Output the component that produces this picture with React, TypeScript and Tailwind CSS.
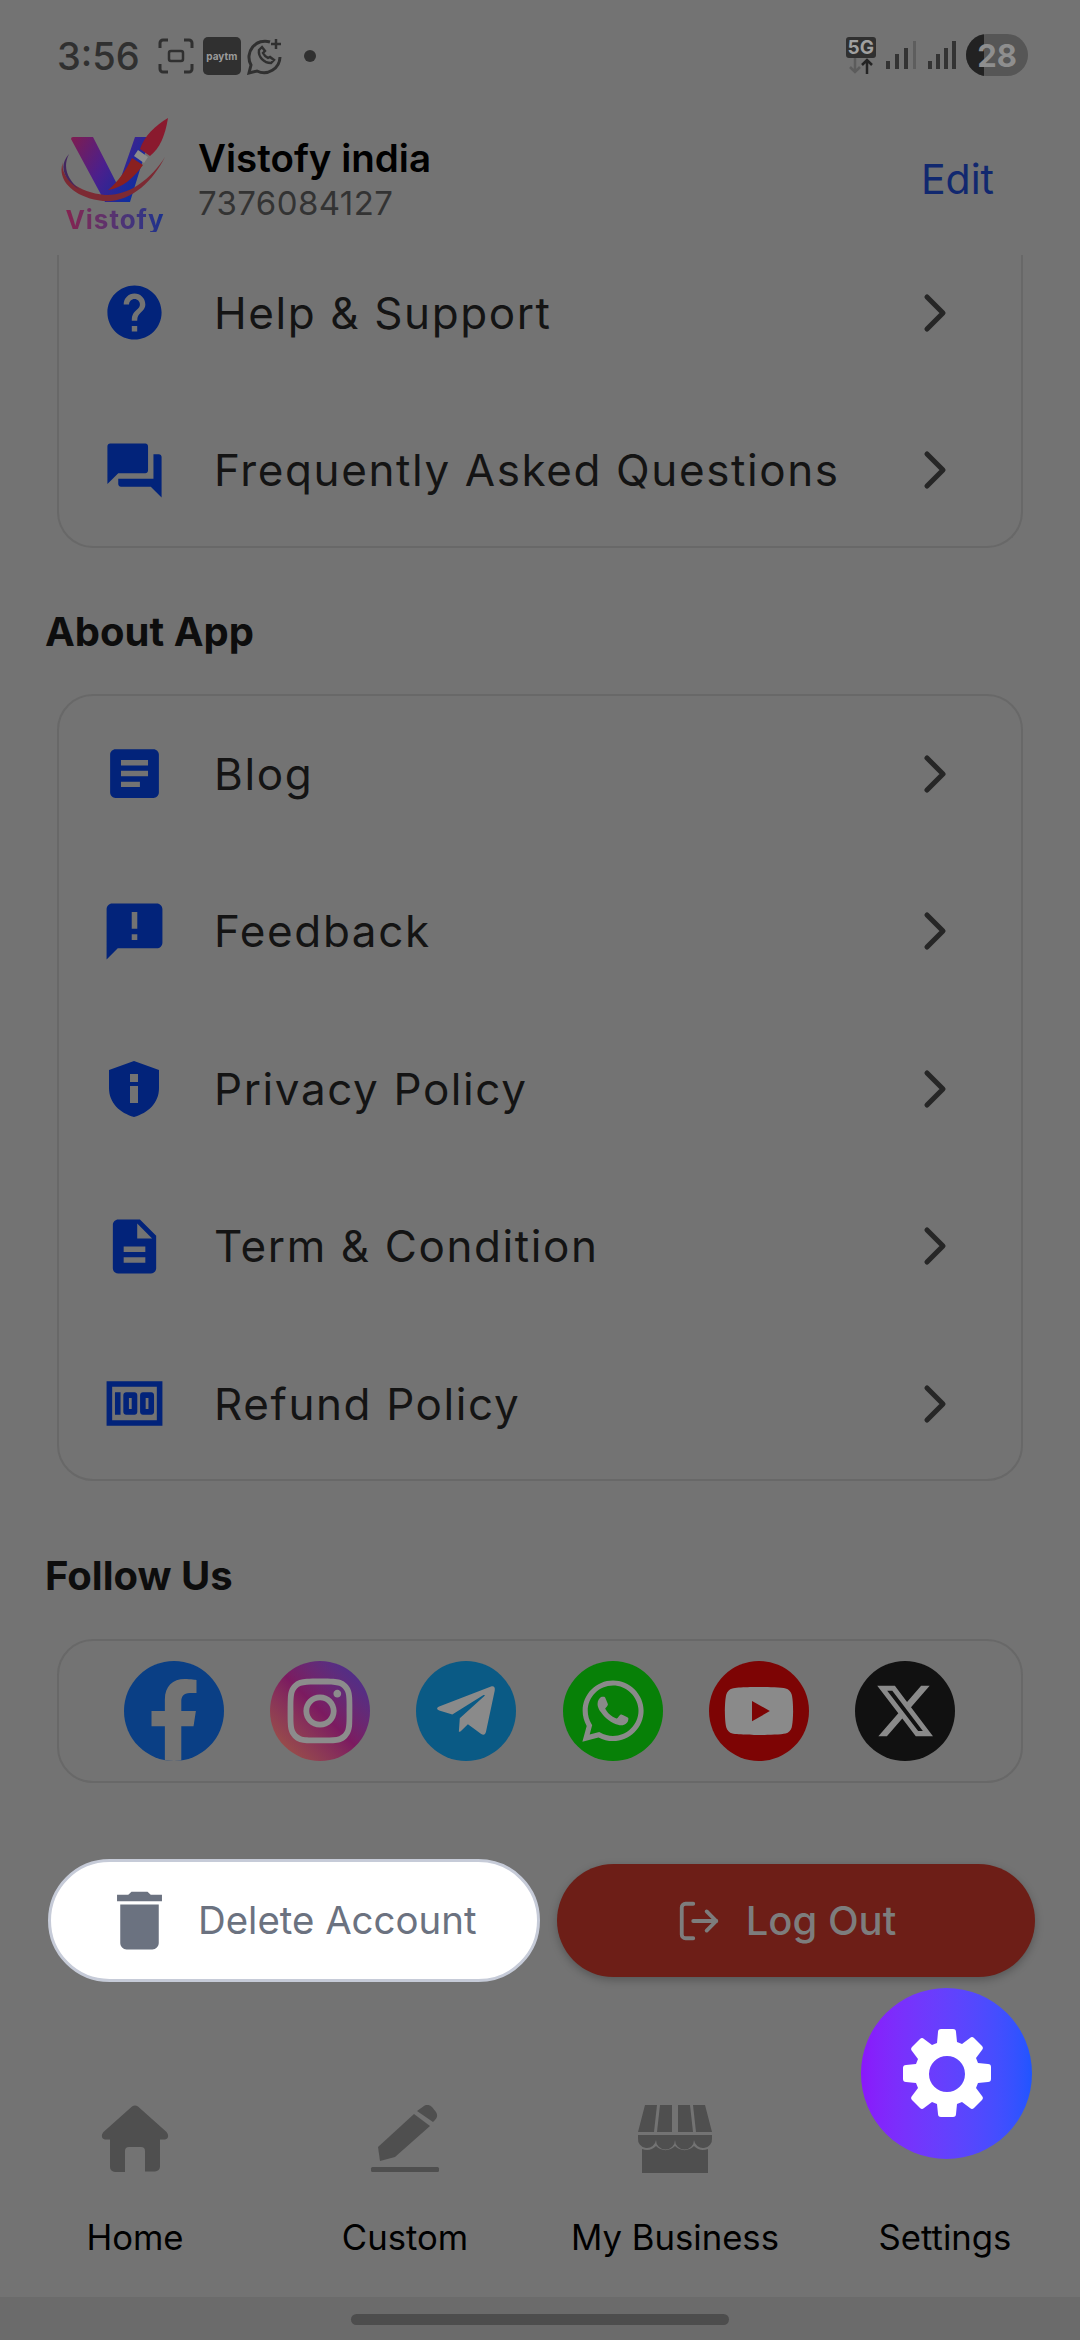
import { ChevronRight, LogOut } from 'lucide-react'
import { MdHelp, MdForum, MdArticle, MdAnnouncement, MdDescription, MdMoney, MdDelete } from 'react-icons/md'
import { FaFacebookF, FaInstagram, FaTelegramPlane, FaWhatsapp, FaYoutube } from 'react-icons/fa'
import { FaXTwitter } from 'react-icons/fa6'
import type { ReactNode } from 'react'

function ShieldInfo({ size }: { size: number }) {
  return (
    <svg width={size} height={size} viewBox="0 0 64 64" fill="#02237a">
      <path fillRule="evenodd" d="M32 4 L57 13 V31 C57 46 46 56 32 60 C18 56 7 46 7 31 V13 Z M28 17 H36 V25 H28 Z M28 29 H36 V46 H28 Z" />
    </svg>
  )
}

function Gear() {
  return (
    <svg width="90" height="90" viewBox="0 0 90 90" fill="#ffffff">
      <path
        fillRule="evenodd"
        d="M36 3a3 3 0 0 1 3-3h12a3 3 0 0 1 3 3l1 10 5 2 8-6a3 3 0 0 1 4 0l8 8a3 3 0 0 1 0 4l-6 8 2 5 10 1a3 3 0 0 1 3 3v12a3 3 0 0 1-3 3l-10 1-2 5 6 8a3 3 0 0 1 0 4l-8 8a3 3 0 0 1-4 0l-8-6-5 2-1 10a3 3 0 0 1-3 3H39a3 3 0 0 1-3-3l-1-10-5-2-8 6a3 3 0 0 1-4 0l-8-8a3 3 0 0 1 0-4l6-8-2-5-10-1a3 3 0 0 1-3-3V39a3 3 0 0 1 3-3l10-1 2-5-6-8a3 3 0 0 1 0-4l8-8a3 3 0 0 1 4 0l8 6 5-2zM45 27a18 18 0 1 0 0 36 18 18 0 0 0 0-36z"
      />
    </svg>
  )
}

const HELP_ITEMS = [
  { label: 'Help & Support', icon: <MdHelp size={65} color="#02237a" /> },
  { label: 'Frequently Asked Questions', icon: <MdForum size={65} color="#02237a" /> },
]

const ABOUT_ITEMS = [
  { label: 'Blog', icon: <MdArticle size={65} color="#02237a" /> },
  { label: 'Feedback', icon: <MdAnnouncement size={67} color="#02237a" /> },
  { label: 'Privacy Policy', icon: <ShieldInfo size={64} /> },
  { label: 'Term & Condition', icon: <MdDescription size={65} color="#02237a" /> },
  { label: 'Refund Policy', icon: <MdMoney size={67} color="#02237a" /> },
]

function Row({ label, icon }: { label: string; icon: ReactNode }) {
  return (
    <div className="flex h-[157.5px] shrink-0 items-center">
      <div className="mr-[5px] flex w-[150px] shrink-0 justify-center">{icon}</div>
      <span className="flex-1 text-[44px] tracking-[1.6px] text-[#141414]">{label}</span>
      <ChevronRight size={64} strokeWidth={1.9} color="#262626" className="mr-[54px]" />
    </div>
  )
}

function StatusBar() {
  return (
    <div className="flex h-[76px] items-end justify-between pl-[57px] pr-[52px]">
      <div className="mb-[-6px] flex items-center">
        <span className="text-[38px] font-medium leading-[52px] text-[#303030]">3:56</span>
        <svg width="36" height="36" viewBox="0 0 36 36" fill="none" stroke="#303030" strokeWidth="3" className="ml-[18px]">
          <path d="M2 10V5a3 3 0 0 1 3-3h5M26 2h5a3 3 0 0 1 3 3v5M34 26v5a3 3 0 0 1-3 3h-5M10 34H5a3 3 0 0 1-3-3v-5" />
          <rect x="11" y="13" width="14" height="10" rx="2" strokeWidth="2.5" />
        </svg>
        <div className="ml-[9px] flex h-[38px] w-[38px] items-center justify-center rounded-[5px] bg-[#303030] text-[10px] font-bold text-[#9a9a9a]">
          paytm
        </div>
        <svg width="38" height="38" viewBox="0 0 38 38" fill="none" stroke="#303030" strokeWidth="3" className="ml-[5px]">
          <path d="M24 5A16 16 0 0 0 5 28L3 36l8-2a16 16 0 0 0 23-14" />
          <path d="M13 13c-1 7 5 13 12 13l3-3-4-3-2 1c-2-1-4-3-5-5l2-2-3-4z" strokeWidth="2.4" />
          <path d="M30 2v10M25 7h10" strokeWidth="2.5" />
        </svg>
        <span className="ml-[20px] h-[12px] w-[12px] rounded-full bg-[#303030]" />
      </div>
      <div className="flex items-center">
        <div className="flex flex-col items-center">
          <span className="rounded-[3px] bg-[#303030] px-[2px] text-[19px] font-bold leading-[21px] text-[#a0a0a0]">5G</span>
          <svg width="28" height="16" viewBox="0 0 28 16" fill="none" strokeWidth="2.5">
            <path d="M8 0v14M3 9l5 5 5-5" stroke="#5c5c5c" />
            <path d="M20 16V2M15 7l5-5 5 5" stroke="#242424" />
          </svg>
        </div>
        <svg width="46" height="30" viewBox="0 0 46 30" className="ml-[7px]">
          <rect x="3" y="21" width="4" height="8" fill="#333" />
          <rect x="12" y="14" width="4" height="15" fill="#333" />
          <rect x="21" y="8" width="4" height="21" fill="#333" />
          <rect x="30" y="1" width="3" height="28" fill="#5e5e5e" />
        </svg>
        <svg width="34" height="30" viewBox="0 0 34 30" className="mr-[3px] ml-[-4px]">
          <rect x="3" y="21" width="4" height="8" fill="#333" />
          <rect x="11" y="14" width="4" height="15" fill="#333" />
          <rect x="19" y="8" width="4" height="21" fill="#333" />
          <rect x="27" y="1" width="4" height="28" fill="#333" />
        </svg>
        <div className="relative ml-[4px] flex h-[42px] w-[62px] items-center justify-center overflow-hidden rounded-full bg-[#565656]">
          <div className="absolute inset-y-0 left-0 w-[18px] bg-[#222222]" />
          <span className="relative text-[31px] font-bold leading-none text-[#8e8e8e]">28</span>
        </div>
      </div>
    </div>
  )
}

function VistofyLogo() {
  return (
    <div className="flex w-[110px] flex-col items-center">
      <svg width="110" height="90" viewBox="0 0 110 90">
        <defs>
          <linearGradient id="vg" x1="0" y1="0" x2="1" y2="0.5">
            <stop offset="0" stopColor="#7f1d4f" />
            <stop offset="0.5" stopColor="#4b1f8c" />
            <stop offset="1" stopColor="#0c2ea0" />
          </linearGradient>
        </defs>
        <path d="M11 21a2 2 0 0 1 2-2h20L58 68 75 19h15L70 84H45z" fill="url(#vg)" />
        <path d="M108 0c-3 18-8 30-18 38l-10-7C84 18 96 7 108 0z" fill="#8a1a2e" />
        <path d="M78 32l10 7-4 6-10-7z" fill="#8c8c8c" />
        <path d="M72 40l11 7C74 60 62 70 48 72 58 64 66 52 72 40z" fill="#8a2020" />
        <path d="M3 44c-3 14 12 30 42 33 24 1 46-16 60-38-12 24-34 46-62 44C14 80-4 62 3 44z" fill="#7d2a33" />
        <path d="M9 36C-2 48 4 62 20 72 8 62 2 50 9 36z" fill="#43265f" />
      </svg>
      <span className="bg-gradient-to-r from-[#86204f] to-[#15308f] bg-clip-text text-[26px] font-bold leading-[24px] tracking-[1px] text-transparent">
        Vistofy
      </span>
    </div>
  )
}

function Social({ className, children }: { className: string; children: ReactNode }) {
  return <div className={`flex h-[100px] w-[100px] items-center justify-center overflow-hidden rounded-full ${className}`}>{children}</div>
}

function NavHome() {
  return (
    <svg width="68" height="67" viewBox="0 0 68 67" fill="#4f4f4f">
      <path fillRule="evenodd" d="M31 1.500a5 5 0 0 1 6 0l28 25c3 3 3 7-1 8h-5v27a5 5 0 0 1-5 5H44V46a4 4 0 0 0-4-4H28a4 4 0 0 0-4 4v21H14a5 5 0 0 1-5-5V34.500H4c-4-1-4-5-1-8z" />
    </svg>
  )
}

function NavCustom() {
  return (
    <svg width="70" height="68" viewBox="0 0 70 68" fill="#4f4f4f">
      <path d="M44 9 60 21 25 52 10 56 8 42z" />
      <path d="M47 6 54 1a6 6 0 0 1 8 1l4 5a6 6 0 0 1-1 8l-2 2z" />
      <rect x="1" y="62" width="68" height="5" rx="1.500" />
    </svg>
  )
}

function NavStore() {
  return (
    <svg width="76" height="68" viewBox="0 0 76 68" fill="#4f4f4f">
      <path d="M8 0H20L17 27H1zM23 0H35V27H20zM41 0H53L56 27H41zM56 0H68L75 27H59z" />
      <path d="M1 30H75V33A9 9 0 0 1 57 35 9.500 9.500 0 0 1 38 35 9.500 9.500 0 0 1 19 35 9 9 0 0 1 1 33z" />
      <path d="M5 44a13 13 0 0 0 14-3 13 13 0 0 0 19 0 13 13 0 0 0 19 0 13 13 0 0 0 14 3V68H5z" />
    </svg>
  )
}

const NAV_ITEMS = [
  { label: 'Home', icon: <NavHome /> },
  { label: 'Custom', icon: <NavCustom /> },
  { label: 'My Business', icon: <NavStore /> },
  { label: 'Settings', icon: <div className="h-[67px]" /> },
]

export default function App() {
  return (
    <div className="relative flex h-[2340px] w-[1080px] flex-col overflow-hidden bg-[#737373] font-['Inter',sans-serif]">
      <StatusBar />

      <div className="flex h-[179px] items-start pl-[60px] pr-[86px] pt-[42px]">
        <VistofyLogo />
        <div className="ml-[28px] flex flex-1 flex-col pt-[17px]">
          <span className="text-[38.5px] font-semibold leading-[46px] text-black">Vistofy india</span>
          <span className="text-[33px] leading-[44px] tracking-[0.4px] text-[#333333]">7376084127</span>
        </div>
        <span className="mt-[37px] text-[41px] leading-[48px] text-[#11286f]">Edit</span>
      </div>

      <div className="mx-[57px] flex h-[293px] flex-col rounded-b-[36px] border-2 border-t-0 border-[#686868]">
        <div className="-mt-[21px]">
          {HELP_ITEMS.map(item => <Row key={item.label} {...item} />)}
        </div>
      </div>

      <h2 className="mt-[60px] pl-[45px] text-[40px] font-bold leading-[48px] text-[#0d0d0d]">About App</h2>
      <div className="mx-[57px] mt-[38px] flex h-[787px] flex-col rounded-[36px] border-2 border-[#686868]">
        <div className="-mt-[1px]">
          {ABOUT_ITEMS.map(item => <Row key={item.label} {...item} />)}
        </div>
      </div>

      <h2 className="mt-[71px] pl-[45px] text-[40px] font-bold leading-[48px] text-[#0d0d0d]">Follow Us</h2>
      <div className="mx-[57px] mt-[39px] flex h-[144px] items-center justify-between rounded-[36px] border-2 border-[#686868] pl-[65px] pr-[66px]">
        <Social className="bg-[#0a3f85]">
          <FaFacebookF size={84} color="#737373" className="mt-[20px]" />
        </Social>
        <Social className="bg-gradient-to-tr from-[#a35a3c] via-[#7c1a60] to-[#3f2f96]">
          <FaInstagram size={74} color="#8c8c8c" />
        </Social>
        <Social className="bg-[#0a5a85]">
          <FaTelegramPlane size={66} color="#8a8a8a" />
        </Social>
        <Social className="bg-[#078007]">
          <FaWhatsapp size={70} color="#8a8a8a" />
        </Social>
        <Social className="bg-[#7d0404]">
          <FaYoutube size={72} color="#8a8a8a" />
        </Social>
        <Social className="bg-[#111111]">
          <FaXTwitter size={62} color="#8a8a8a" />
        </Social>
      </div>

      <div className="mt-[76px] flex items-center pl-[48px] pr-[45px]">
        <button className="flex h-[123px] w-[492px] items-center rounded-full border-[3px] border-[#c6cbd8] bg-white pl-[50px]">
          <MdDelete size={77} color="#6b7280" />
          <span className="ml-[20px] text-[38.4px] text-[#6b7280]">Delete Account</span>
        </button>
        <button className="ml-[17px] flex h-[113px] flex-1 items-center justify-center rounded-full bg-[#6d1e17] pr-[20px] shadow-[0_3px_8px_rgba(0,0,0,0.25)]">
          <LogOut size={46} color="#7d7d7d" strokeWidth={2} />
          <span className="ml-[24px] text-[40px] font-medium text-[#7d7d7d]">Log Out</span>
        </button>
      </div>

      <div className="mt-[123px] grid grid-cols-4">
        {NAV_ITEMS.map(item => (
          <div key={item.label} className="flex flex-col items-center">
            <div className="flex h-[67px] items-start">{item.icon}</div>
            <span className="mt-[43px] text-[34.7px] leading-[44px] text-black">{item.label}</span>
          </div>
        ))}
      </div>

      <div className="mt-[38px] flex flex-1 justify-center bg-[#6b6b6b] pt-[17px]">
        <div className="h-[11px] w-[378px] rounded-full bg-[#4d4d4d]" />
      </div>

      <div className="absolute left-[861px] top-[1988px] flex h-[171px] w-[171px] items-center justify-center rounded-full bg-gradient-to-r from-[#8a17fb] to-[#1f55ff]">
        <Gear />
      </div>
    </div>
  )
}
